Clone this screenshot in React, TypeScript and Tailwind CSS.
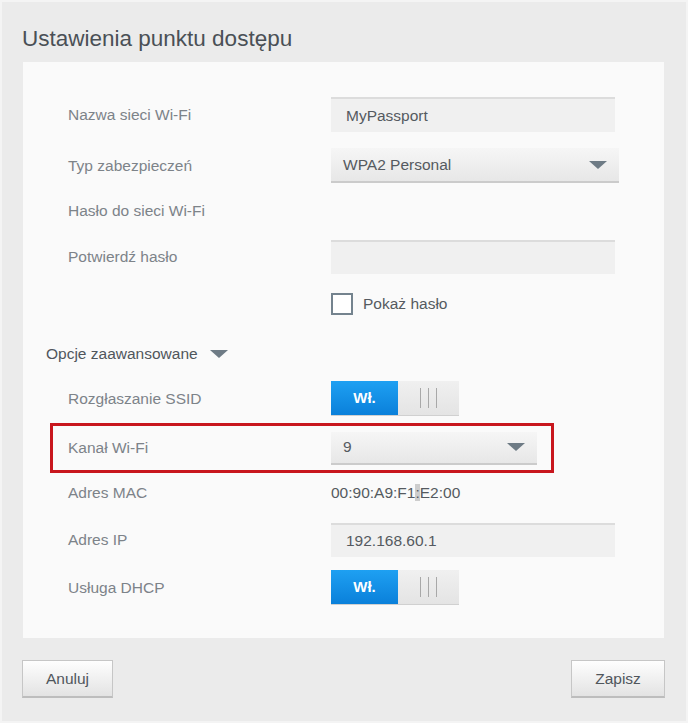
import React from "react";

const font = { fontFamily: '"Liberation Sans", Arial, sans-serif' };

const Arrow = () => (
  <svg width="18" height="8" viewBox="0 0 18 8" className="shrink-0">
    <path d="M0 0 H18 L9 8 Z" fill="#6e7b85" />
  </svg>
);

const Label: React.FC<{ children: React.ReactNode }> = ({ children }) => (
  <div className="w-[308px] shrink-0 pl-[45px] text-[15.5px] text-[#7d8389]">{children}</div>
);

const TextInput: React.FC<{ value?: string }> = ({ value }) => (
  <div className="flex h-full w-[284px] items-center border-t-2 border-[#dcdcdc] bg-[#f0f0f0] pl-[15px] text-[15.5px] text-[#555a60]">
    {value}
  </div>
);

const Select: React.FC<{ value: string; width: string }> = ({ value, width }) => (
  <div
    className={`flex h-full ${width} items-center justify-between border-b-2 border-[#cbcbcb] bg-gradient-to-b from-[#f6f6f6] to-[#e7e7e7] pl-[12px] pr-[12px] text-[15.5px] text-[#555a60]`}
  >
    <span>{value}</span>
    <Arrow />
  </div>
);

const Toggle = () => (
  <div className="flex h-[35px] w-[128px] border-b border-[#d0d0d0]">
    <div className="flex w-[67px] items-center justify-center bg-gradient-to-b from-[#1ea0f2] to-[#0a80da] text-[15px] font-bold text-white">
      Wł.
    </div>
    <div className="flex flex-1 items-center justify-center gap-[7px] bg-gradient-to-b from-[#f0f0f0] to-[#e4e4e4]">
      <div className="h-[20px] w-px bg-[#a8a8a8]" />
      <div className="h-[20px] w-px bg-[#a8a8a8]" />
      <div className="h-[20px] w-px bg-[#a8a8a8]" />
    </div>
  </div>
);

const Button: React.FC<{ children: React.ReactNode; width: string }> = ({ children, width }) => (
  <button
    className={`flex h-[38px] ${width} items-center justify-center border border-[#c6c6c6] border-b-2 border-b-[#bdbdbd] bg-gradient-to-b from-[#fefefe] to-[#e3e3e3] text-[15.5px] text-[#50565c]`}
  >
    {children}
  </button>
);

export default function App() {
  return (
    <div
      style={font}
      className="flex h-[723px] w-[688px] flex-col border-2 border-[#f4f4f4] bg-[#ebebeb]"
    >
      <h1 className="ml-[20px] mt-[24px] h-[34px] text-[22.5px] leading-[26px] text-[#4a5056]">
        Ustawienia punktu dostępu
      </h1>

      <div className="ml-[21px] mt-[2px] flex h-[576px] w-[641px] flex-col bg-[#fafafa]">
        <div className="mt-[35px] flex h-[35px] items-center">
          <Label>Nazwa sieci Wi-Fi</Label>
          <TextInput value="MyPassport" />
        </div>

        <div className="mt-[16px] flex h-[35px] items-center">
          <Label>Typ zabezpieczeń</Label>
          <Select value="WPA2 Personal" width="w-[288px]" />
        </div>

        <div className="mt-[10px] flex h-[35px] items-center">
          <Label>Hasło do sieci Wi-Fi</Label>
        </div>

        <div className="mt-[12px] flex h-[34px] items-center">
          <Label>Potwierdź hasło</Label>
          <TextInput />
        </div>

        <div className="mt-[18px] flex h-[24px] items-center">
          <div className="w-[308px] shrink-0" />
          <div className="h-[22px] w-[22px] border-2 border-[#74838e] bg-white" />
          <span className="ml-[10px] text-[15.5px] text-[#555a60]">Pokaż hasło</span>
        </div>

        <div className="mt-[28px] flex h-[20px] items-center pl-[23px]">
          <span className="text-[15.5px] text-[#50565c]">Opcje zaawansowane</span>
          <span className="ml-[12px]">
            <Arrow />
          </span>
        </div>

        <div className="mt-[17px] flex h-[35px] items-center">
          <Label>Rozgłaszanie SSID</Label>
          <Toggle />
        </div>

        <div className="ml-[27px] mt-[7px] flex h-[50px] w-[504px] items-center border-[3px] border-[#c8161d]">
          <div className="w-[278px] shrink-0 pl-[15px] text-[15.5px] text-[#7d8389]">Kanał Wi-Fi</div>
          <div className="h-[33px]">
            <Select value="9" width="w-[206px]" />
          </div>
        </div>

        <div className="mt-[10px] flex h-[20px] items-center">
          <Label>Adres MAC</Label>
          <span className="text-[15.5px] text-[#555a60]">
            00:90:A9:F1<span className="bg-[#cdcdcd]">:</span>E2:00
          </span>
        </div>

        <div className="mt-[20px] flex h-[34px] items-center">
          <Label>Adres IP</Label>
          <TextInput value="192.168.60.1" />
        </div>

        <div className="mt-[13px] flex h-[35px] items-center">
          <Label>Usługa DHCP</Label>
          <Toggle />
        </div>
      </div>

      <div className="mt-[22px] flex justify-between pl-[20px] pr-[21px]">
        <Button width="w-[91px]">Anuluj</Button>
        <Button width="w-[94px]">Zapisz</Button>
      </div>
    </div>
  );
}
